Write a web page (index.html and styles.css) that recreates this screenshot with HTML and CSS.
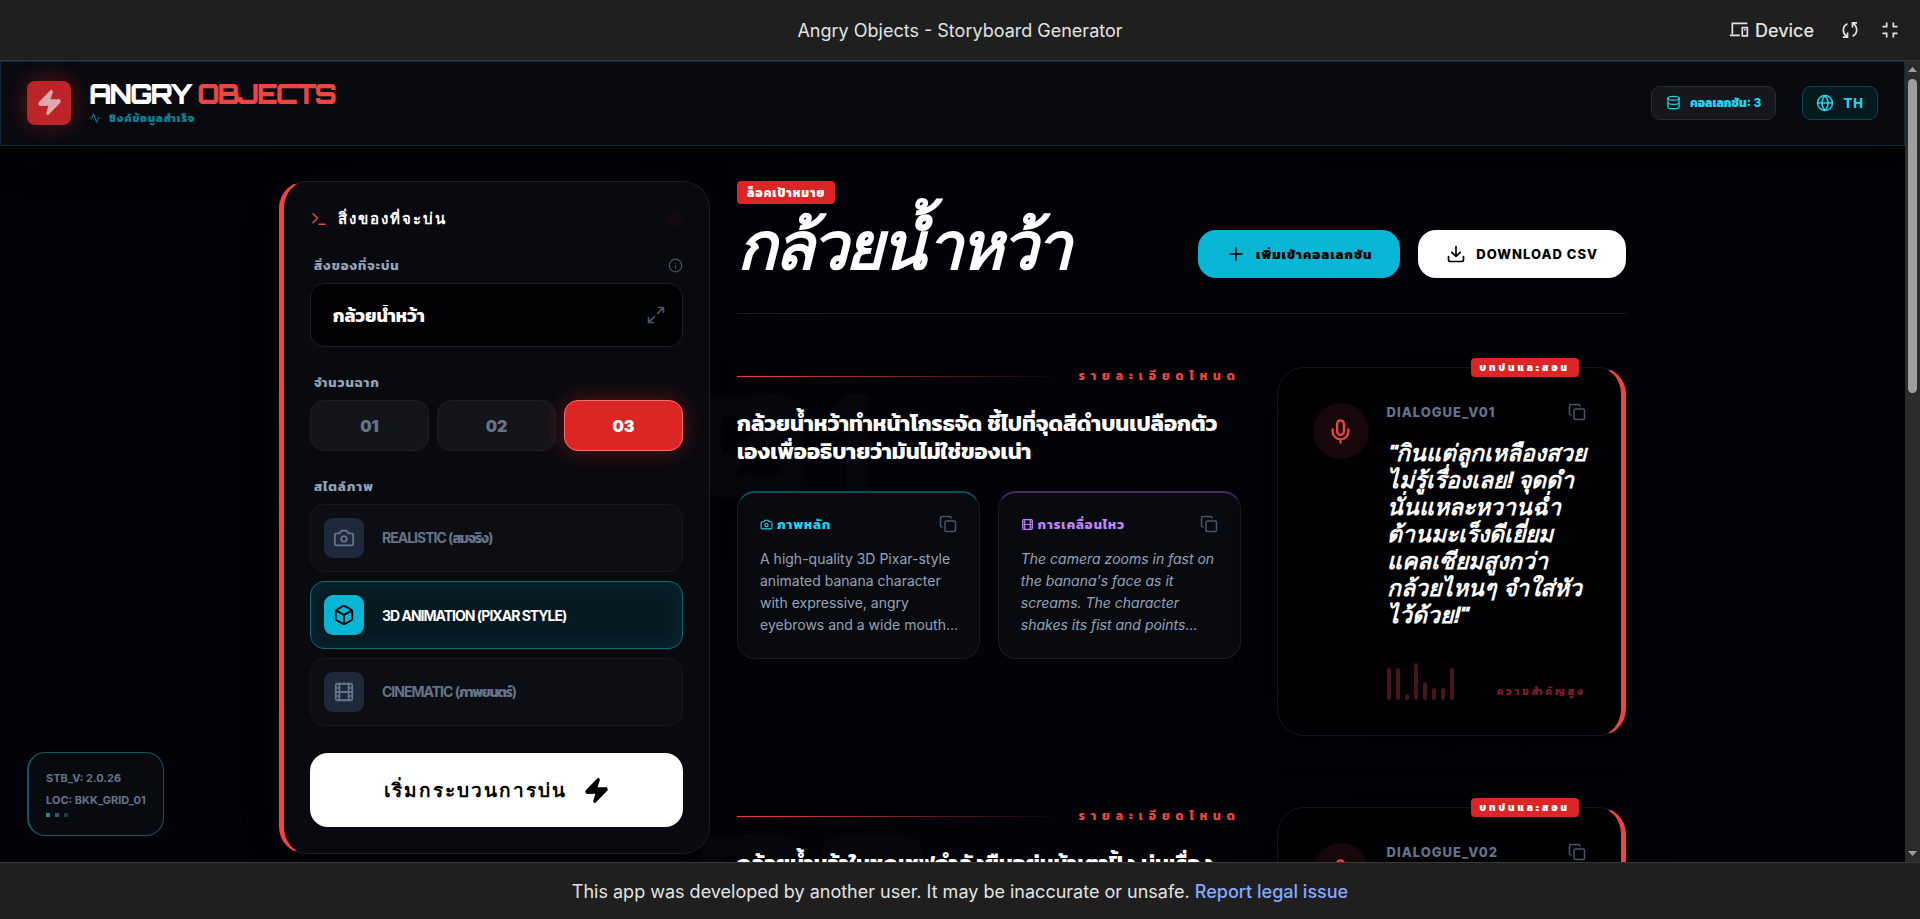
FILE: index.html
```html
<!DOCTYPE html>
<html lang="th">
<head>
    <meta charset="UTF-8">
    <meta name="viewport" content="width=device-width, initial-scale=1.0">
    <title>Angry Objects - Storyboard Generator</title>
    <link rel="stylesheet" href="styles.css">
</head>
<body>
    <!-- shared icons -->
    <svg class="sprite" aria-hidden="true">
        <symbol id="i-bolt" viewBox="0 0 24 24"><path d="M4 14a1 1 0 0 1-.78-1.63l9.9-10.2a.5.5 0 0 1 .86.46l-1.92 6.02A1 1 0 0 0 13 10h7a1 1 0 0 1 .78 1.63l-9.9 10.2a.5.5 0 0 1-.86-.46l1.92-6.02A1 1 0 0 0 11 14z"/></symbol>
        <symbol id="i-camera" viewBox="0 0 24 24"><path d="M14.5 4h-5L7 7H4a2 2 0 0 0-2 2v9a2 2 0 0 0 2 2h16a2 2 0 0 0 2-2V9a2 2 0 0 0-2-2h-3z"/><circle cx="12" cy="13" r="3"/></symbol>
        <symbol id="i-film" viewBox="0 0 24 24"><rect width="18" height="18" x="3" y="3" rx="2"/><path d="M7 3v18M3 7.500h4M3 12h18M3 16.500h4M17 3v18M17 7.500h4M17 16.500h4"/></symbol>
        <symbol id="i-copy" viewBox="0 0 24 24"><rect width="14" height="14" x="8" y="8" rx="2"/><path d="M4 16c-1.100 0-2-.9-2-2V4c0-1.100.9-2 2-2h10c1.100 0 2 .9 2 2"/></symbol>
        <symbol id="i-mic" viewBox="0 0 24 24"><path d="M12 2a3 3 0 0 0-3 3v7a3 3 0 0 0 6 0V5a3 3 0 0 0-3-3Z"/><path d="M19 10v2a7 7 0 0 1-14 0v-2M12 19v3"/></symbol>
    </svg>

    <div class="topbar">
        <h1 class="topbar-title">Angry Objects - Storyboard Generator</h1>
        <div class="topbar-actions">
            <button class="bar-btn device">
                <svg class="icon s20" viewBox="0 0 24 24"><path d="M22 4H4v13M1 18.500h12M16 9h6v10h-6zM18 11.500h2"/></svg>
                Device
            </button>
            <button class="bar-btn" aria-label="Reload">
                <svg class="icon s20" viewBox="0 0 24 24"><path d="M9 4.500C5.500 6 4 9 4 12s1.500 6 4 8M3.500 20.500H9V15M15 19.500c3.500-1.500 5-4.500 5-7.500s-1.500-6-4-8M20.500 3.500H15V9"/></svg>
            </button>
            <button class="bar-btn" aria-label="Exit full screen">
                <svg class="icon s20" viewBox="0 0 24 24"><path d="M8 3v5H3M16 3v5h5M8 21v-5H3M16 21v-5h5"/></svg>
            </button>
        </div>
    </div>

    <div class="stage">
        <div class="app">
            <header class="header">
                <div class="brand">
                    <div class="logo"><svg class="icon solid s28"><use href="#i-bolt"/></svg></div>
                    <div class="brand-text">
                        <div class="brand-name">ANGRY <span>OBJECTS</span></div>
                        <div class="brand-status">
                            <svg class="icon s12" viewBox="0 0 24 24"><path d="M22 12h-4l-3 9L9 3l-3 9H2"/></svg>
                            ซิงค์ข้อมูลสำเร็จ
                        </div>
                    </div>
                </div>
                <div class="header-actions">
                    <button class="pill">
                        <svg class="icon s16" viewBox="0 0 24 24"><ellipse cx="12" cy="5" rx="9" ry="3"/><path d="M3 5v14a9 3 0 0 0 18 0V5M3 12a9 3 0 0 0 18 0"/></svg>
                        คอลเลกชัน: 3
                    </button>
                    <button class="pill lang">
                        <svg class="icon s18" viewBox="0 0 24 24"><circle cx="12" cy="12" r="10"/><path d="M12 2a14.500 14.500 0 0 0 0 20 14.500 14.500 0 0 0 0-20M2 12h20"/></svg>
                        TH
                    </button>
                </div>
            </header>

            <main class="layout">
                <aside class="panel">
                    <div class="panel-head">
                        <h2 class="panel-title">
                            <svg class="icon s18" viewBox="0 0 24 24"><path d="m4 17 6-6-6-6M12 19h8"/></svg>
                            สิ่งของที่จะบ่น
                        </h2>
                        <span class="pulse"></span>
                    </div>

                    <div class="field">
                        <div class="field-head">
                            <label for="subject">สิ่งของที่จะบ่น</label>
                            <svg class="icon s16" viewBox="0 0 24 24"><circle cx="12" cy="12" r="10"/><path d="M12 16v-4M12 8h.01"/></svg>
                        </div>
                        <div class="input-box">
                            <input id="subject" type="text" value="กล้วยน้ำหว้า">
                            <svg class="icon s20" viewBox="0 0 24 24"><path d="M15 3h6v6M21 3l-7 7M3 21l7-7M9 21H3v-6"/></svg>
                        </div>
                    </div>

                    <div class="field">
                        <div class="field-head">จำนวนฉาก</div>
                        <div class="counts">
                            <button class="count">01</button>
                            <button class="count">02</button>
                            <button class="count active">03</button>
                        </div>
                    </div>

                    <div class="field">
                        <div class="field-head">สไตล์ภาพ</div>
                        <div class="styles">
                            <button class="style">
                                <span class="style-icon"><svg class="icon s22"><use href="#i-camera"/></svg></span>
                                REALISTIC (สมจริง)
                            </button>
                            <button class="style active">
                                <span class="style-icon"><svg class="icon s22" viewBox="0 0 24 24"><path d="M21 8a2 2 0 0 0-1-1.730l-7-4a2 2 0 0 0-2 0l-7 4A2 2 0 0 0 3 8v8a2 2 0 0 0 1 1.730l7 4a2 2 0 0 0 2 0l7-4A2 2 0 0 0 21 16ZM3.300 7l8.700 5 8.700-5M12 22V12"/></svg></span>
                                3D ANIMATION (PIXAR STYLE)
                            </button>
                            <button class="style">
                                <span class="style-icon"><svg class="icon s22"><use href="#i-film"/></svg></span>
                                CINEMATIC (ภาพยนตร์)
                            </button>
                        </div>
                    </div>

                    <button class="start">
                        เริ่มกระบวนการบ่น
                        <svg class="icon solid s28"><use href="#i-bolt"/></svg>
                    </button>
                </aside>

                <section class="content">
                    <div class="content-head">
                        <div>
                            <span class="target">ล็อคเป้าหมาย</span>
                            <h2 class="object-name">กล้วยน้ำหว้า</h2>
                        </div>
                        <div class="content-actions">
                            <button class="action cyan">
                                <svg class="icon s20" viewBox="0 0 24 24"><path d="M5 12h14M12 5v14"/></svg>
                                เพิ่มเข้าคอลเลกชัน
                            </button>
                            <button class="action white">
                                <svg class="icon s20" viewBox="0 0 24 24"><path d="M21 15v4a2 2 0 0 1-2 2H5a2 2 0 0 1-2-2v-4M7 10l5 5 5-5M12 15V3"/></svg>
                                DOWNLOAD CSV
                            </button>
                        </div>
                    </div>

                    <article class="scene">
                        <div class="ghost">01</div>
                        <div class="scene-main">
                            <div class="scene-label"><span class="rule"></span>รายละเอียดโหนด</div>
                            <h3 class="scene-title">กล้วยน้ำหว้าทำหน้าโกรธจัด ชี้ไปที่จุดสีดำบนเปลือกตัวเองเพื่ออธิบายว่ามันไม่ใช่ของเน่า</h3>
                            <div class="prompts">
                                <div class="prompt image">
                                    <div class="prompt-head">
                                        <span><svg class="icon s14"><use href="#i-camera"/></svg>ภาพหลัก</span>
                                        <button class="copy" aria-label="Copy"><svg class="icon s18"><use href="#i-copy"/></svg></button>
                                    </div>
                                    <p>A high-quality 3D Pixar-style animated banana character with expressive, angry eyebrows and a wide mouth...</p>
                                </div>
                                <div class="prompt motion">
                                    <div class="prompt-head">
                                        <span><svg class="icon s14"><use href="#i-film"/></svg>การเคลื่อนไหว</span>
                                        <button class="copy" aria-label="Copy"><svg class="icon s18"><use href="#i-copy"/></svg></button>
                                    </div>
                                    <p>The camera zooms in fast on the banana's face as it screams. The character shakes its fist and points...</p>
                                </div>
                            </div>
                        </div>
                        <div class="dialogue">
                            <span class="dialogue-tag">บทบ่นและสอน</span>
                            <div class="mic"><svg class="icon s28"><use href="#i-mic"/></svg></div>
                            <div class="dialogue-body">
                                <div class="dialogue-head">
                                    DIALOGUE_V01
                                    <button class="copy" aria-label="Copy"><svg class="icon s18"><use href="#i-copy"/></svg></button>
                                </div>
                                <p class="quote">"กินแต่ลูกเหลืองสวยไม่รู้เรื่องเลย! จุดดำนั่นแหละหวานฉ่ำ ต้านมะเร็งดีเยี่ยม แคลเซียมสูงกว่ากล้วยไหนๆ จำใส่หัวไว้ด้วย!"</p>
                                <div class="dialogue-foot">
                                    <div class="wave">
                                        <i style="height: 32px"></i><i style="height: 32px"></i><i style="height: 6px"></i><i style="height: 37px"></i><i style="height: 18px"></i><i style="height: 12px"></i><i style="height: 12px"></i><i style="height: 32px"></i>
                                    </div>
                                    <span class="priority">ความสำคัญสูง</span>
                                </div>
                            </div>
                        </div>
                    </article>

                    <article class="scene">
                        <div class="ghost">02</div>
                        <div class="scene-main">
                            <div class="scene-label"><span class="rule"></span>รายละเอียดโหนด</div>
                            <h3 class="scene-title">กล้วยน้ำหว้าในชุดเชฟกำลังยืนอยู่หน้าเตาปิ้ง บ่นเรื่องคน</h3>
                        </div>
                        <div class="dialogue">
                            <span class="dialogue-tag">บทบ่นและสอน</span>
                            <div class="mic"><svg class="icon s28"><use href="#i-mic"/></svg></div>
                            <div class="dialogue-body">
                                <div class="dialogue-head">
                                    DIALOGUE_V02
                                    <button class="copy" aria-label="Copy"><svg class="icon s18"><use href="#i-copy"/></svg></button>
                                </div>
                            </div>
                        </div>
                    </article>
                </section>
            </main>

            <div class="system">
                <div>STB_V: 2.0.26</div>
                <div>LOC: BKK_GRID_01</div>
                <div class="dots"><i></i><i></i><i></i></div>
            </div>
        </div>
        <div class="scrollbar">
            <svg class="arrow" viewBox="0 0 9 5"><path d="M0 5 4.500 0 9 5z"/></svg>
            <div class="track"><div class="thumb"></div></div>
            <svg class="arrow" viewBox="0 0 9 5"><path d="M0 0 4.500 5 9 0z"/></svg>
        </div>
    </div>

    <footer class="notice">
        <span>This app was developed by another user. It may be inaccurate or unsafe. <a href="#">Report legal issue</a></span>
    </footer>
</body>
</html>
```

FILE: styles.css
```css
* {
    box-sizing: border-box;
    margin: 0;
    padding: 0;
}
body {
    display: flex;
    flex-direction: column;
    height: 100vh;
    overflow: hidden;
    background: #1f1f1f;
    color: #fff;
    font-family: Inter, Kanit, sans-serif;
}
button {
    border: none;
    background: none;
    color: inherit;
    font: inherit;
    cursor: pointer;
}
.sprite {
    display: none;
}
.icon {
    flex: none;
    fill: none;
    stroke: currentColor;
    stroke-width: 2;
    stroke-linecap: round;
    stroke-linejoin: round;
}
.solid { fill: currentColor; }
.s12 { width: 12px; height: 12px; }
.s14 { width: 13px; height: 13px; }
.s16 { width: 15px; height: 15px; }
.s18 { width: 18px; height: 18px; }
.s20 { width: 20px; height: 20px; }
.s22 { width: 22px; height: 22px; }
.s28 { width: 27px; height: 27px; }

/* outer bars */
.topbar {
    display: grid;
    grid-template-columns: 1fr auto 1fr;
    align-items: center;
    flex: none;
    height: 61px;
    padding: 0 20px;
    border-bottom: 1px solid #37393b;
    color: #e3e3e3;
}
.topbar-title {
    grid-column: 2;
    font-size: 18px;
    font-weight: 400;
}
.topbar-actions {
    display: flex;
    justify-content: flex-end;
    gap: 20px;
}
.bar-btn {
    display: flex;
    align-items: center;
    gap: 6px;
    font-size: 18px;
    font-weight: 500;
}
.bar-btn .icon {
    stroke-linecap: butt;
    stroke-linejoin: miter;
}
.device {
    margin-right: 6px;
}
.notice {
    display: flex;
    align-items: center;
    justify-content: center;
    flex: none;
    height: 57px;
    border-top: 1px solid #37393b;
    color: #e3e3e3;
    font-size: 18px;
}
.notice a {
    color: #87a9ff;
    font-weight: 500;
    text-decoration: none;
}
.stage {
    display: flex;
    flex: 1;
    min-height: 0;
}
.scrollbar {
    display: flex;
    flex-direction: column;
    align-items: center;
    width: 15px;
    padding: 6px 0;
    background: #2c2c2c;
}
.arrow {
    width: 9px;
    height: 5px;
    fill: #9f9f9f;
}
.track {
    flex: 1;
    width: 9px;
    padding: 7px 0;
}
.thumb {
    height: 41%;
    border-radius: 5px;
    background: #9f9f9f;
}

/* app */
.app {
    position: relative;
    flex: 1;
    overflow: hidden;
    background: radial-gradient(circle at 15% 50%, #010108, #020208 40%, #020207);
}
.header {
    display: flex;
    align-items: center;
    justify-content: space-between;
    height: 85px;
    padding: 0 26px 2px;
    border: 1px solid #0d2b35;
    background: #090a0f;
    box-shadow: 0 10px 36px rgba(0, 0, 0, 0.8);
}
.brand {
    display: flex;
    align-items: center;
    gap: 18px;
}
.logo {
    display: grid;
    place-items: center;
    width: 44px;
    height: 44px;
    border-radius: 8px;
    background: #bb2429;
    color: #dfa9ac;
    box-shadow: 0 0 22px rgba(220, 38, 38, 0.4);
}
.brand-text {
    padding-top: 3px;
}
.brand-name {
    font-family: Orbitron, "DejaVu Sans", sans-serif;
    font-size: 27px;
    font-weight: 900;
    line-height: 27px;
    letter-spacing: -2px;
}
.brand-name span {
    color: #ef4444;
}
.brand-status {
    display: flex;
    align-items: center;
    gap: 8px;
    color: #107f91;
    font-size: 11px;
    font-weight: 800;
    line-height: 20px;
    letter-spacing: 1px;
}
.header-actions {
    display: flex;
    gap: 26px;
}
.pill {
    display: flex;
    align-items: center;
    gap: 9px;
    height: 34px;
    padding: 0 14px;
    border: 1px solid #292b30;
    border-radius: 9px;
    background: #16171c;
    color: #22d3ee;
    font-size: 12px;
    font-weight: 800;
}
.lang {
    padding: 0 13px;
    border-color: #0c4650;
    background: #06191f;
    font-size: 13px;
    letter-spacing: 1px;
}
.layout {
    display: grid;
    grid-template-columns: repeat(12, 1fr);
    align-items: start;
    gap: 27px;
    max-width: 1401px;
    margin: 0 auto;
    padding: 35px 27px;
}

/* sidebar */
.panel {
    position: relative;
    z-index: 1;
    grid-column: span 4;
    display: flex;
    flex-direction: column;
    gap: 27px;
    padding: 26px;
    border: 1px solid #1c1d22;
    border-left: 5px solid #ef4444;
    border-radius: 27px;
    background: #090a0f;
    box-shadow: 0 0 40px rgba(60, 10, 20, 0.15);
}
.panel-head {
    display: flex;
    align-items: center;
    justify-content: space-between;
    height: 22px;
}
.panel-title {
    display: flex;
    align-items: center;
    gap: 10px;
    font-family: Orbitron, "Liberation Serif", serif;
    font-size: 15px;
    font-weight: 900;
    letter-spacing: 2px;
}
.panel-title .icon {
    color: #ef4444;
}
.pulse {
    width: 16px;
    height: 16px;
    border-radius: 50%;
    background: #120a0f;
}
.field {
    display: flex;
    flex-direction: column;
    gap: 10px;
}
.field-head {
    display: flex;
    align-items: center;
    justify-content: space-between;
    height: 16px;
    padding: 0 0 0 4px;
    color: #94a3b8;
    font-size: 13px;
    font-weight: 700;
    letter-spacing: 1px;
}
.field-head .icon {
    color: #475569;
}
.input-box {
    display: flex;
    align-items: center;
    height: 64px;
    padding: 0 16px 0 22px;
    border: 1px solid #1f2024;
    border-radius: 14px;
    background: #020205;
    color: #475569;
}
.input-box input {
    flex: 1;
    min-width: 0;
    border: none;
    outline: none;
    background: none;
    color: #fff;
    font: 700 18px Inter, Kanit, sans-serif;
}
.counts {
    display: grid;
    grid-template-columns: repeat(3, 1fr);
    gap: 8px;
}
.count {
    height: 51px;
    border: 1px solid #1e1f24;
    border-radius: 14px;
    background: #14151a;
    color: #64748b;
    font-size: 16px;
    font-weight: 900;
}
.count.active {
    border-color: #f87171;
    background: #dc2626;
    color: #fff;
    box-shadow: 0 0 22px rgba(220, 38, 38, 0.4);
}
.styles {
    display: flex;
    flex-direction: column;
    gap: 9px;
}
.style {
    display: flex;
    align-items: center;
    gap: 18px;
    height: 68px;
    padding: 0 13px;
    border: 1px solid #17181d;
    border-radius: 14px;
    background: #0d0e13;
    color: #64748b;
    font-size: 14px;
    font-weight: 700;
    letter-spacing: -1px;
}
.style.active {
    border-color: #0a6775;
    background: #081a21;
    color: #fff;
    box-shadow: inset 0 0 20px rgba(6, 182, 212, 0.1);
}
.style-icon {
    display: grid;
    place-items: center;
    width: 40px;
    height: 40px;
    border-radius: 9px;
    background: #1e293b;
}
.style.active .style-icon {
    background: #06b6d4;
    color: #000;
}
.start {
    display: flex;
    align-items: center;
    justify-content: center;
    gap: 16px;
    height: 74px;
    border-radius: 18px;
    background: #fff;
    color: #000;
    font-family: Orbitron, "Liberation Sans", sans-serif;
    font-size: 19px;
    font-weight: 900;
    letter-spacing: 2px;
}

/* content */
.content {
    grid-column: span 8;
}
.content-head {
    display: flex;
    align-items: flex-end;
    justify-content: space-between;
    padding-bottom: 35px;
    border-bottom: 1px solid #1b1c21;
    margin-bottom: 53px;
}
.target {
    display: block;
    width: fit-content;
    padding: 0 10px;
    border-radius: 4px;
    background: #dc2626;
    font-size: 12px;
    font-weight: 800;
    line-height: 23px;
    letter-spacing: 1px;
}
.object-name {
    margin-top: 6px;
    font-family: Orbitron, "Liberation Sans", sans-serif;
    font-size: 66px;
    font-style: italic;
    font-weight: 900;
    line-height: 68px;
    letter-spacing: -3px;
}
.content-actions {
    display: flex;
    gap: 18px;
}
.action {
    display: flex;
    align-items: center;
    gap: 10px;
    height: 48px;
    padding: 0 28px;
    border-radius: 18px;
    color: #000;
    font-size: 13px;
    font-weight: 800;
    letter-spacing: 1px;
}
.cyan { background: #06b6d4; }
.white { background: #fff; }
.scene {
    position: relative;
    display: grid;
    grid-template-columns: repeat(12, 1fr);
    align-items: start;
    column-gap: 36px;
    margin-bottom: 71px;
}
/* oversized scene number behind the text */
.ghost {
    position: absolute;
    top: 4px;
    left: -44px;
    color: rgba(255, 255, 255, 0.02);
    font-family: Orbitron, "DejaVu Sans", sans-serif;
    font-size: 144px;
    font-weight: 900;
    line-height: 144px;
}
.scene-main {
    position: relative;
    grid-column: span 7;
}
.scene-label {
    display: flex;
    align-items: center;
    gap: 16px;
    color: #ef4444;
    font-size: 12px;
    font-weight: 700;
    line-height: 18px;
    letter-spacing: 6px;
}
.rule {
    flex: 1;
    height: 1px;
    background: linear-gradient(to right, #ef4444, transparent);
}
.scene-title {
    margin: 24px 0 26px;
    font-size: 22px;
    font-weight: 700;
    line-height: 28px;
}
.prompts {
    display: grid;
    grid-template-columns: 1fr 1fr;
    gap: 18px;
}
.prompt {
    padding: 20px 22px;
    border: 1px solid #1b1c21;
    border-top: 2px solid #0c4f5a;
    border-radius: 18px;
    background: #090a0f;
    color: #94a3b8;
    font-size: 14px;
    line-height: 22px;
}
.prompt p {
    margin: 0 -8px 2px 0;
}
.motion {
    border-top-color: #462a66;
}
.motion p {
    font-style: italic;
}
.prompt-head {
    display: flex;
    align-items: center;
    justify-content: space-between;
    margin-bottom: 13px;
}
.prompt-head span {
    display: flex;
    align-items: center;
    gap: 4px;
    color: #22d3ee;
    font-size: 13px;
    font-weight: 700;
    letter-spacing: 1px;
}
.motion .prompt-head span {
    color: #c084fc;
}
.copy {
    display: flex;
    color: #475569;
}
.dialogue {
    position: relative;
    grid-column: span 5;
    display: flex;
    gap: 18px;
    padding: 35px;
    border: 1px solid #15161a;
    border-right: 5px solid #ef4444;
    border-radius: 27px;
    background: #010104;
    box-shadow: 0 0 36px rgba(0, 0, 0, 0.6);
}
.dialogue-tag {
    position: absolute;
    top: -10px;
    right: 42px;
    padding: 0 9px;
    border-radius: 4px;
    background: #dc2626;
    font-size: 10px;
    font-weight: 800;
    line-height: 19px;
    letter-spacing: 3px;
}
.mic {
    display: grid;
    place-items: center;
    flex: none;
    width: 56px;
    height: 56px;
    border-radius: 50%;
    background: #17060a;
    color: #ef4444;
}
.dialogue-body {
    flex: 1;
    min-width: 0;
}
.dialogue-head {
    display: flex;
    align-items: center;
    justify-content: space-between;
    height: 18px;
    color: #64748b;
    font-size: 13px;
    font-weight: 800;
    letter-spacing: 1px;
}
.quote {
    margin: 18px 0 36px;
    font-family: Orbitron, "Liberation Sans", sans-serif;
    font-size: 23px;
    font-style: italic;
    font-weight: 900;
    line-height: 27px;
}
.dialogue-foot {
    display: flex;
    align-items: flex-end;
    justify-content: space-between;
}
.wave {
    display: flex;
    align-items: flex-end;
    gap: 5px;
    height: 36px;
}
.wave i {
    width: 4px;
    border-radius: 2px;
    background: #48151a;
}
.priority {
    color: #7f1d22;
    font-size: 10px;
    font-weight: 800;
    line-height: 18px;
    letter-spacing: 3px;
}

/* floating system box */
.system {
    position: absolute;
    bottom: 26px;
    left: 27px;
    padding: 14px 17px;
    border: 1px solid #0d5862;
    border-left-width: 2px;
    border-radius: 18px;
    background: #090a0f;
    color: #64748b;
    font-size: 11px;
    font-weight: 700;
    line-height: 22px;
}
.dots {
    display: flex;
    gap: 5px;
    padding: 2px 0 4px;
}
.dots i {
    width: 4px;
    height: 4px;
    background: #2b8292;
}
.dots i:nth-child(2) { opacity: 0.7; }
.dots i:nth-child(3) { opacity: 0.4; }
```
